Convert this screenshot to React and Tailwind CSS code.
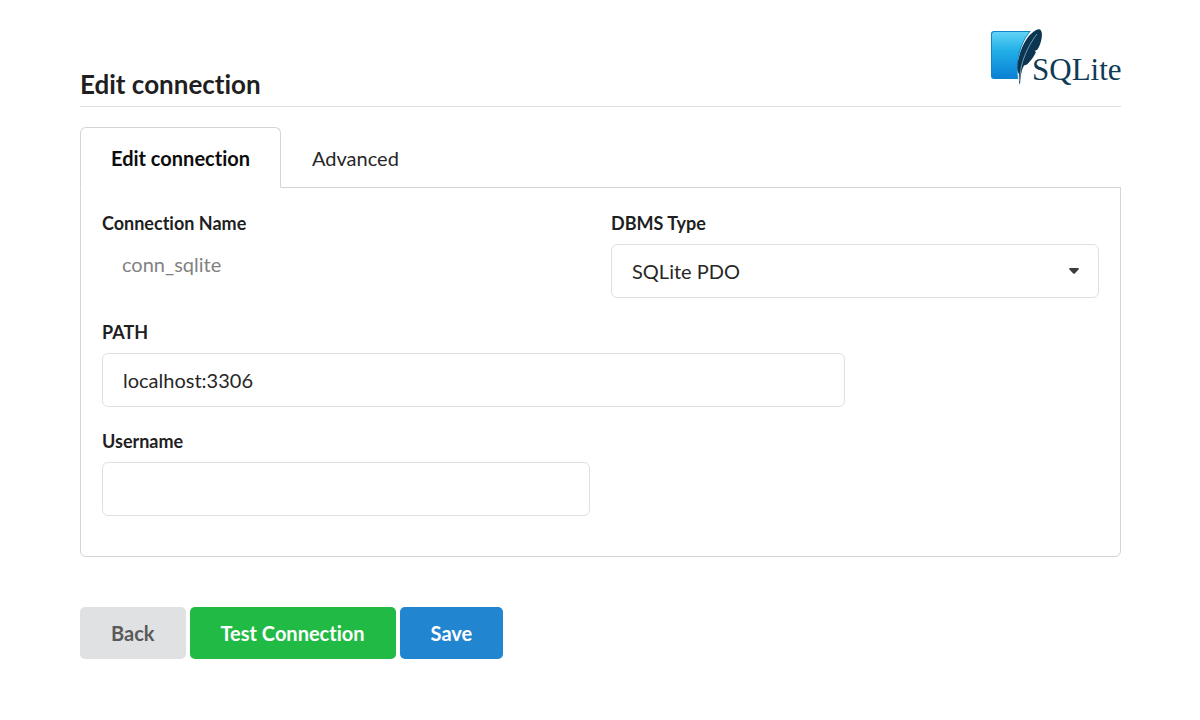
import { useState } from "react";
import clsx from "clsx";

const tabs = ["Edit connection", "Advanced"];

function SqliteLogo() {
  return (
    <svg
      width="131"
      height="60"
      viewBox="0 0 131 60"
      role="img"
      aria-label="SQLite"
      className="shrink-0"
    >
      <defs>
        <linearGradient id="tile" x1="0" y1="0" x2="0" y2="1">
          <stop offset="0" stopColor="#62d3f6" />
          <stop offset="0.4" stopColor="#22b0e8" />
          <stop offset="1" stopColor="#0a80d4" />
        </linearGradient>
      </defs>
      <path
        d="M4 3H41C35 9 31 19 29 28C27 36 27.500 44 28 51H4Q1 51 1 48V6Q1 3 4 3Z"
        fill="#0f86cc"
      />
      <path
        d="M4.500 4H39C34 10 30 19 28 28C26.500 36 26.500 43 27 50H4.500Q2 50 2 47.500V6.500Q2 4 4.500 4Z"
        fill="url(#tile)"
      />
      <path
        d="M50 1.500C52.500 3 52.500 9 50.500 15C49.500 18 48.500 20 47 22L44.500 23L46 24C44 29 40.500 33 37 36.500L34 37.500C32 41 30.500 47 30 57C28.500 54 28.800 49 29 46C26.500 42 27 36 29 29C31 20 36 10 42 5C45 2.500 48 0.800 50 1.500Z"
        fill="#0b3550"
      />
      <path
        d="M47 6C40 15 34 27 31.500 38C30.500 43 30 47 29.500 53"
        fill="none"
        stroke="#8fb4c8"
        strokeWidth="0.8"
      />
      <text
        x="42"
        y="52"
        fontSize="31"
        fill="#0f3a55"
        className="font-['Liberation_Serif',serif]"
      >
        SQLite
      </text>
    </svg>
  );
}

function Field({ id, label, className, children }) {
  return (
    <div className={clsx("flex flex-col gap-[9px]", className)}>
      <label htmlFor={id} className="text-lg leading-6 font-bold">
        {label}
      </label>
      {children}
    </div>
  );
}

const inputStyle =
  "h-[54px] w-full rounded-md border border-[#dfe0e1] bg-white px-5 text-xl text-[#272727] outline-none focus:border-[#85b7d9]";

const buttonStyle =
  "h-[52px] cursor-pointer rounded-[5px] px-[31px] text-xl font-bold";

export default function App() {
  const [activeTab, setActiveTab] = useState(tabs[0]);
  const [path, setPath] = useState("localhost:3306");
  const [username, setUsername] = useState("");

  return (
    <main className="min-h-screen bg-white px-5 pt-7 pb-15 font-[Lato,sans-serif] text-[#1f1f1f] [font-variant-ligatures:none] md:pr-[79px] md:pl-20">
      <header className="flex items-end justify-between border-b border-[#dedfdf] pb-1.5">
        <h1 className="text-[26px] leading-8 font-bold">Edit connection</h1>
        <div className="mb-3">
          <SqliteLogo />
        </div>
      </header>

      <form onSubmit={(e) => e.preventDefault()}>
        <div role="tablist" className="mt-5 flex">
          {tabs.map((tab) => (
            <button
              key={tab}
              type="button"
              role="tab"
              aria-selected={tab === activeTab}
              onClick={() => setActiveTab(tab)}
              className={clsx(
                "-mb-px h-[61px] cursor-pointer rounded-t-md border px-[30px] text-xl",
                tab === activeTab
                  ? "z-10 border-[#d4d4d5] border-b-white bg-white font-bold text-[#0c0c0c]"
                  : "border-transparent text-[#272727]",
              )}
            >
              {tab}
            </button>
          ))}
        </div>

        <section className="grid grid-cols-4 gap-x-[21px] gap-y-[22px] rounded-b-md border border-[#d4d4d5] px-[21px] pt-[23px] pb-10">
          <Field id="name" label="Connection Name" className="col-span-2">
            <input
              id="name"
              readOnly
              value="conn_sqlite"
              className="h-10 w-full px-5 text-xl text-[#828282] outline-none"
            />
          </Field>
          <Field id="dbms" label="DBMS Type" className="col-span-2">
            <div className="relative">
              <select id="dbms" className={clsx(inputStyle, "appearance-none")}>
                <option>SQLite PDO</option>
              </select>
              <svg
                width="10"
                height="6"
                viewBox="0 0 10 6"
                className="pointer-events-none absolute top-6 right-5"
              >
                <path
                  d="M1 0H9Q10.500 0.300 9.500 1.500L6 5.300Q5 6.300 4 5.300L0.500 1.500Q-0.500 0.300 1 0Z"
                  fill="#3c3c3c"
                />
              </svg>
            </div>
          </Field>
          <Field id="path" label="PATH" className="col-span-3">
            <input
              id="path"
              type="text"
              value={path}
              onChange={(e) => setPath(e.target.value)}
              className={inputStyle}
            />
          </Field>
          <Field id="username" label="Username" className="col-span-2 col-start-1">
            <input
              id="username"
              type="text"
              value={username}
              onChange={(e) => setUsername(e.target.value)}
              className={inputStyle}
            />
          </Field>
        </section>

        <div className="mt-[50px] flex flex-wrap gap-1">
          <button
            type="button"
            className={clsx(buttonStyle, "bg-[#e0e1e2] text-[#5a5a5a]")}
          >
            Back
          </button>
          <button
            type="button"
            className={clsx(buttonStyle, "bg-[#21ba45] text-white")}
          >
            Test Connection
          </button>
          <button
            type="submit"
            className={clsx(buttonStyle, "bg-[#2185d0] text-white")}
          >
            Save
          </button>
        </div>
      </form>
    </main>
  );
}
